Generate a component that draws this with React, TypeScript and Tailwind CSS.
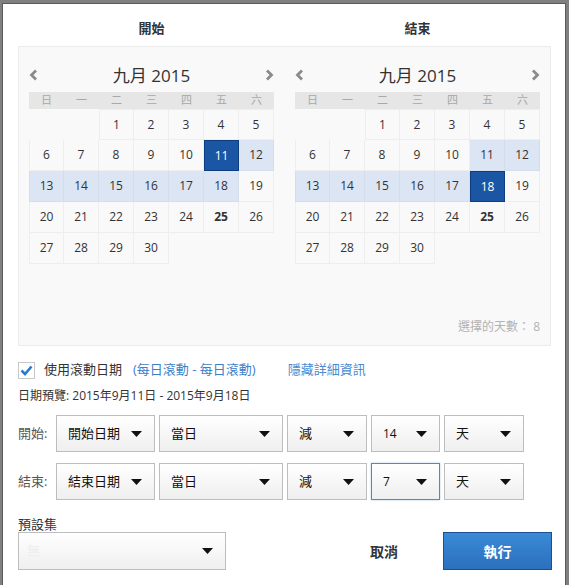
const weekdays = ["日", "一", "二", "三", "四", "五", "六"];

const weeks: (number | null)[][] = [
  [null, null, 1, 2, 3, 4, 5],
  [6, 7, 8, 9, 10, 11, 12],
  [13, 14, 15, 16, 17, 18, 19],
  [20, 21, 22, 23, 24, 25, 26],
  [27, 28, 29, 30, null, null, null],
];

function Chevron({ dir }: { dir: "left" | "right" }) {
  return (
    <svg width="9" height="12" viewBox="0 0 9 12" className="text-[#8a8a8a]">
      <polyline
        points={dir === "left" ? "7,1.5 2.5,6 7,10.5" : "2,1.5 6.5,6 2,10.5"}
        fill="none"
        stroke="currentColor"
        strokeWidth="2.8"
      />
    </svg>
  );
}

function Calendar({ pick }: { pick: number }) {
  return (
    <div className="w-[245px]">
      <div className="flex h-[28px] items-center justify-between">
        <Chevron dir="left" />
        <span className="text-[17px] leading-none text-[#333]">九月 2015</span>
        <Chevron dir="right" />
      </div>
      <div className="mt-[3px] grid h-[17px] grid-cols-7 bg-[#e6e6e6] text-[11px] text-[#a8a8a8]">
        {weekdays.map((d) => (
          <div key={d} className="flex items-center justify-center">
            {d}
          </div>
        ))}
      </div>
      {weeks.map((week, r) => (
        <div key={r} className="grid h-[31px] grid-cols-7">
          {week.map((day, c) => {
            if (day === null) return <div key={c} />;
            const selected = day === pick;
            const inRange = day >= 11 && day <= 18 && !selected;
            let cls = "border-r border-b border-[#eeeeee] text-[#333]";
            if (r === 0) cls += " border-t";
            if (c === 0 || day === 1) cls += " border-l";
            if (inRange) cls = cls.replace("border-[#eeeeee]", "border-[#d3ddeb]") + " bg-[#dce5f3]";
            if (selected) cls = "border border-[#0e3e7e] bg-[#1a56a3] text-white";
            return (
              <div
                key={c}
                className={`flex items-center justify-center text-[12px] ${cls} ${day === 25 ? "font-bold" : ""}`}
              >
                {day}
              </div>
            );
          })}
        </div>
      ))}
    </div>
  );
}

function Arrow() {
  return (
    <svg width="11" height="6" viewBox="0 0 11 6">
      <polygon points="0,0 11,0 5.5,6" fill="#111" />
    </svg>
  );
}

function Select({ w, text, active, small }: { w: string; text: string; active?: boolean; small?: boolean }) {
  return (
    <div
      className={`flex h-[37px] ${w} items-center justify-between border bg-linear-to-b from-white to-[#efefef] pr-[12px] pl-[11px] ${
        active ? "border-[#3d8de4] shadow-[0_0_2px_#a9cdf2]" : "border-[#bdbdbd]"
      }`}
    >
      <span className={`${small ? "text-[12px]" : "text-[13px]"} text-[#111]`}>{text}</span>
      <Arrow />
    </div>
  );
}

function Row({ label, first }: { label: string; first: string }) {
  return (
    <div className="flex items-center">
      <span className="w-[38px] text-[13px] text-[#555]">{label}</span>
      <div className="flex gap-[4px]">
        <Select w="w-[99px]" text={first} />
        <Select w="w-[124px]" text="當日" />
        <Select w="w-[80px]" text="減" />
        <Select w="w-[69px]" text={label === "開始:" ? "14" : "7"} small active={label === "結束:"} />
        <Select w="w-[80px]" text="天" />
      </div>
    </div>
  );
}

export default function App() {
  return (
    <div className="h-[585px] w-[569px] bg-[#808080] pt-[3px] pr-[3px] pl-[2px] font-['Open_Sans','Noto_Sans_CJK_TC',sans-serif]">
      <div className="h-full overflow-hidden border-x border-t border-[#5a5a5a] bg-white pt-[16px] pr-[13px] pl-[15px]">
        <div className="flex h-[16px] w-[533px] px-[11px] text-[13px] leading-[16px] font-bold text-[#333]">
          <div className="w-[245px] text-center">開始</div>
          <div className="ml-[21px] w-[245px] text-center">結束</div>
        </div>

        <div className="mt-[10px] flex h-[300px] w-[533px] flex-col border border-[#ececec] bg-[#f9f9f9] px-[10px] pt-[14px]">
          <div className="flex gap-[21px]">
            <Calendar pick={11} />
            <Calendar pick={18} />
          </div>
          <div className="mt-auto mb-[9px] text-right text-[12px] text-[#b3b3b3]">選擇的天數： 8</div>
        </div>

        <div className="mt-[15px] flex h-[18px] items-center text-[13px]">
          <div className="flex h-[17px] w-[17px] items-center justify-center border border-[#c9c9c9] bg-white">
            <svg width="13" height="11" viewBox="0 0 13 11">
              <polyline points="1.5,5.5 5,9 11.5,1.5" fill="none" stroke="#2b7ad0" strokeWidth="2.6" />
            </svg>
          </div>
          <span className="ml-[9px] text-[#333]">使用滾動日期</span>
          <span className="ml-[11px] text-[#3b80cb]">(每日滾動 - 每日滾動)</span>
          <span className="ml-[32px] text-[#4a8bd2]">隱藏詳細資訊</span>
        </div>

        <div className="mt-[9px] h-[16px] text-[12px] leading-[16px] text-[#333]">
          日期預覽: 2015年9月11日 - 2015年9月18日
        </div>

        <div className="mt-[11px]">
          <Row label="開始:" first="開始日期" />
        </div>
        <div className="mt-[11px]">
          <Row label="結束:" first="結束日期" />
        </div>

        <div className="mt-[16px] h-[16px] text-[13px] leading-[16px] text-[#333]">預設集</div>
        <div className="flex items-center">
          <div className="flex h-[38px] w-[208px] items-center justify-between border border-[#bdbdbd] bg-linear-to-b from-white to-[#efefef] pr-[12px] pl-[8px]">
            <span className="text-[13px] text-[#ededed]">無</span>
            <Arrow />
          </div>
          <span className="ml-[144px] text-[14px] font-bold text-[#333]">取消</span>
          <button className="ml-auto flex h-[38px] w-[109px] items-center justify-center border border-[#1d4f8c] bg-linear-to-b from-[#3a8ad8] to-[#2b70bd] text-[14px] font-bold text-white">
            執行
          </button>
        </div>
      </div>
    </div>
  );
}
